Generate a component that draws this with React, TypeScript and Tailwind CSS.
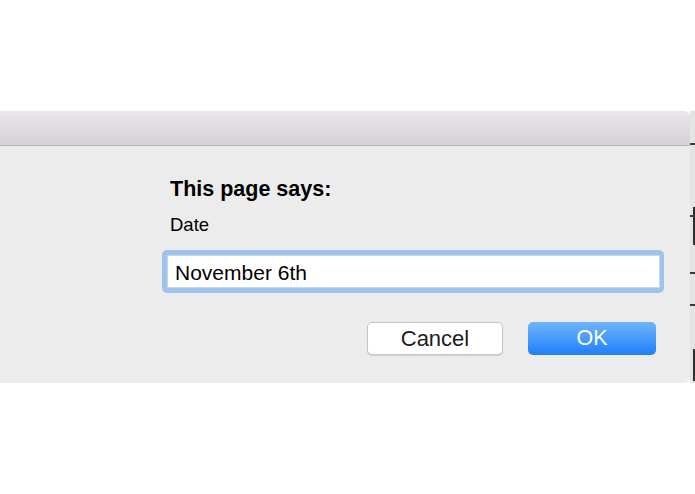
import React from "react";

export default function App() {
  return (
    <div
      className="w-[695px] h-[494px] bg-white overflow-hidden"
      style={{ fontFamily: '"Liberation Sans", Arial, sans-serif' }}
    >
      <div className="h-[111px]" />
      <div className="flex h-[272px]">
        {/* dialog */}
        <div className="w-[690px] h-[272px] bg-[#ececec] rounded-r-[6px] overflow-hidden flex flex-col">
          <div className="h-[35px] shrink-0 bg-gradient-to-b from-[#e9e7e9] to-[#d3d1d3] border-b border-[#b4b4b4]" />
          <div className="flex flex-col pl-[162px] pt-[31px]">
            <div className="pl-[8px] text-[21.5px] leading-[25px] font-bold text-black">
              This page says:
            </div>
            <div className="pl-[8px] mt-[12px] text-[18.5px] leading-[22px] text-black">
              Date
            </div>
            <div className="mt-[14px] w-[502px] h-[43px] rounded-[5px] bg-[#9dc3ee] p-[5px] pr-[4px]">
              <div className="w-full h-full bg-white border border-[#c9d6e4] flex items-center pl-[7px] pt-[3px] text-[21px] text-black">
                November 6th
              </div>
            </div>
            <div className="w-[502px] flex justify-end gap-[25px] pr-[8px] mt-[29px]">
              <div className="w-[136px] h-[33px] rounded-[5px] bg-white border border-[#c6c6c6] shadow-[0_1px_1px_rgba(0,0,0,0.12)] flex items-center justify-center text-[22px] text-[#1c1c1c]">
                Cancel
              </div>
              <div className="w-[128px] h-[33px] rounded-[5px] bg-gradient-to-b from-[#6db4fa] to-[#1a7ffa] flex items-center justify-center text-[21.5px] text-white">
                OK
              </div>
            </div>
          </div>
        </div>
        {/* background page strip */}
        <div className="w-[5px] h-[272px] bg-[#e4e4e4] relative">
          <div className="absolute left-0 top-[32px] w-[5px] h-[2px] bg-[#3a3a3a]" />
          <div className="absolute left-[3px] top-[96px] w-[2px] h-[38px] bg-[#2f2f2f]" />
          <div className="absolute left-0 top-[104px] w-[5px] h-[2px] bg-[#3a3a3a]" />
          <div className="absolute left-0 top-[161px] w-[5px] h-[2px] bg-[#3a3a3a]" />
          <div className="absolute left-0 top-[193px] w-[5px] h-[2px] bg-[#3a3a3a]" />
          <div className="absolute left-[3px] top-[238px] w-[2px] h-[32px] bg-[#2f2f2f]" />
        </div>
      </div>
    </div>
  );
}
